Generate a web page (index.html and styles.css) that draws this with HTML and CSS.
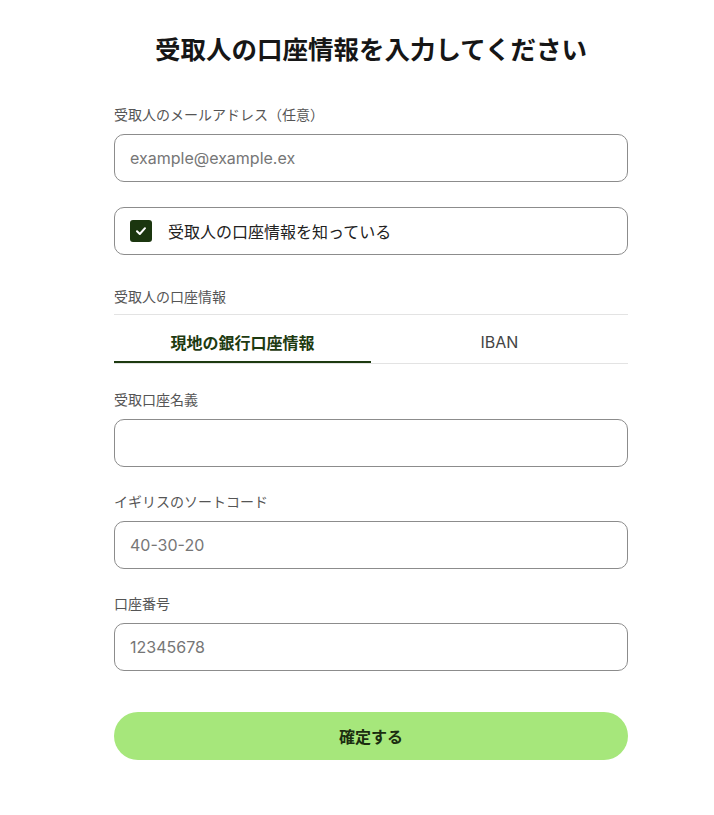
FILE: index.html
```html
<!DOCTYPE html>
<html lang="ja">
<head>
<meta charset="utf-8">
<title>受取人の口座情報</title>
<link rel="stylesheet" href="styles.css">
</head>
<body>
<main class="page">
  <h1 class="title">受取人の口座情報を入力してください</h1>

  <div class="field">
    <label class="label">受取人のメールアドレス（任意）</label>
    <div class="input"><span class="placeholder">example@example.ex</span></div>
  </div>

  <div class="check-row">
    <span class="checkbox">
      <svg width="14" height="14" viewBox="0 0 14 14"><path d="M3 7.2 L5.8 10 L11 4.2" fill="none" stroke="#fff" stroke-width="2" stroke-linecap="round" stroke-linejoin="round"/></svg>
    </span>
    <span class="check-text">受取人の口座情報を知っている</span>
  </div>

  <div class="section-label">受取人の口座情報</div>
  <div class="tabs">
    <div class="tab active">現地の銀行口座情報</div>
    <div class="tab">IBAN</div>
  </div>

  <div class="fields">
    <div class="field">
      <label class="label">受取口座名義</label>
      <div class="input"></div>
    </div>
    <div class="field">
      <label class="label">イギリスのソートコード</label>
      <div class="input"><span class="placeholder">40-30-20</span></div>
    </div>
    <div class="field">
      <label class="label">口座番号</label>
      <div class="input"><span class="placeholder">12345678</span></div>
    </div>
  </div>

  <button class="submit">確定する</button>
</main>
</body>
</html>
```

FILE: styles.css
```css
* { box-sizing: border-box; }
html, body { margin: 0; padding: 0; background: #fff; }
body {
  font-family: Inter, "Noto Sans CJK JP", sans-serif;
  color: #1a1a1a;
}
.page {
  width: 714px;
  padding: 34px 86px 40px 114px;
  display: flex;
  flex-direction: column;
}
.title {
  margin: 0;
  font-size: 25.5px;
  line-height: 32px;
  font-weight: 700;
  text-align: center;
  color: #161616;
}
.field {
  display: flex;
  flex-direction: column;
}
.page > .field { margin-top: 39px; }
.label {
  font-size: 14px;
  line-height: 20px;
  color: #555;
  margin-bottom: 9px;
}
.input {
  height: 48px;
  border: 1px solid #8c8c8c;
  border-radius: 10px;
  display: flex;
  align-items: center;
  padding: 0 15px;
  font-size: 16px;
}
.placeholder { color: #767676; }
.check-row {
  margin-top: 25px;
  height: 48px;
  border: 1px solid #8c8c8c;
  border-radius: 10px;
  display: flex;
  align-items: center;
  padding: 0 15px;
  gap: 16px;
}
.checkbox {
  width: 22px;
  height: 22px;
  border-radius: 3px;
  background: #1b360f;
  display: flex;
  align-items: center;
  justify-content: center;
}
.check-text { font-size: 16px; color: #222; }
.section-label {
  margin-top: 32px;
  font-size: 14px;
  line-height: 20px;
  color: #555;
  padding-bottom: 7px;
  border-bottom: 1px solid #e3e3e3;
}
.tabs {
  display: flex;
  border-bottom: 1px solid #e3e3e3;
}
.tab {
  flex: 1;
  height: 48px;
  display: flex;
  align-items: center;
  justify-content: center;
  padding-top: 6px;
  font-size: 16px;
  color: #444;
}
.tab.active {
  font-weight: 700;
  color: #1d3a10;
  border-bottom: 2px solid #1d3a10;
  margin-bottom: -1px;
  padding-top: 7px;
}
.fields {
  margin-top: 26px;
  display: flex;
  flex-direction: column;
  gap: 25px;
}
.submit {
  margin-top: 41px;
  height: 48px;
  border: none;
  border-radius: 24px;
  background: #a6e77b;
  font-family: Inter, "Noto Sans CJK JP", sans-serif;
  font-size: 16px;
  font-weight: 700;
  color: #1b2e10;
}
```
